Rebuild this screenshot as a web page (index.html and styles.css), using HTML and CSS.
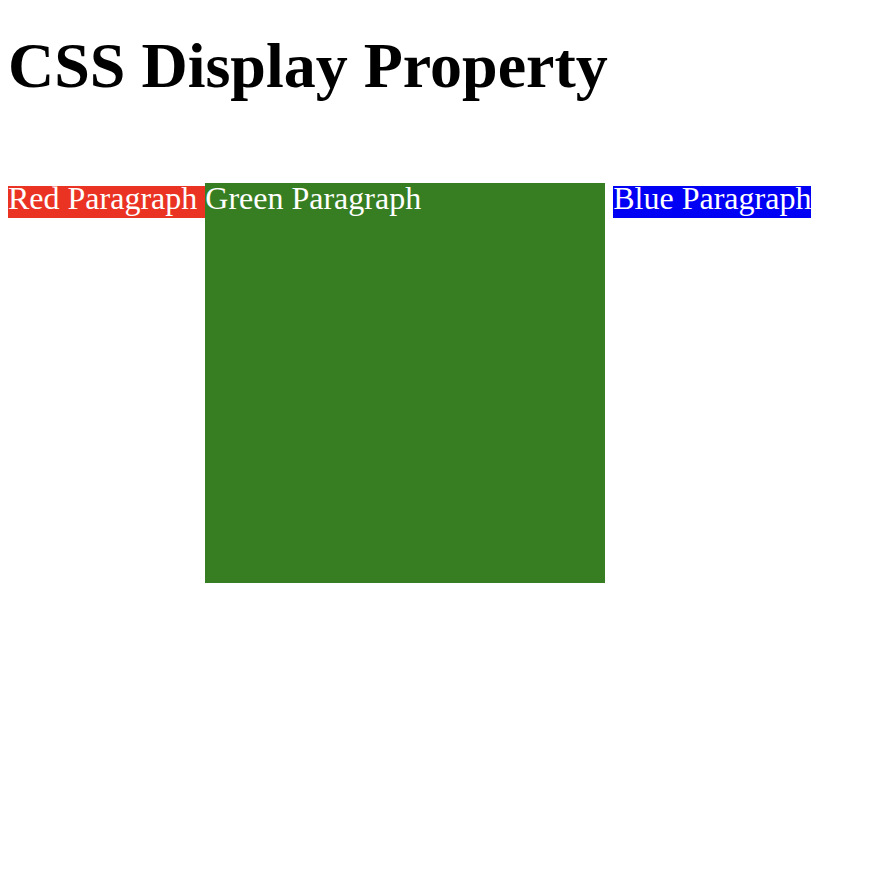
FILE: index.html
```html
<!DOCTYPE html>
<html>
<head>
<meta charset="utf-8">
<title>CSS Display Property</title>
<link rel="stylesheet" href="styles.css">
</head>
<body>
<h1 class="title">CSS Display Property</h1>
<div class="row">
  <p class="para red">Red Paragraph</p>
  <p class="para green">Green Paragraph</p>
  <p class="para blue">Blue Paragraph</p>
</div>
</body>
</html>
```
FILE: styles.css
```css
body {
  margin: 8px;
  font-family: "Liberation Serif", "Times New Roman", serif;
  background: #ffffff;
  color: #000000;
}
.title {
  font-size: 64px;
  font-weight: bold;
  line-height: 74px;
  margin: 21px 0 80px 0;
}
.row {
  display: flex;
  align-items: baseline;
}
.para {
  margin: 0;
  font-size: 32px;
  color: #ffffff;
  white-space: nowrap;
}
.red {
  background: #ea3323;
  line-height: 25.4px;
  padding: 0 8px 6.3px 0;
}
.green {
  background: #377e22;
  width: 400px;
  height: 400px;
  line-height: 31.4px;
}
.blue {
  background: #0000f5;
  line-height: 25.4px;
  padding: 0 0 6.3px 0;
  margin-left: 8px;
}
```
